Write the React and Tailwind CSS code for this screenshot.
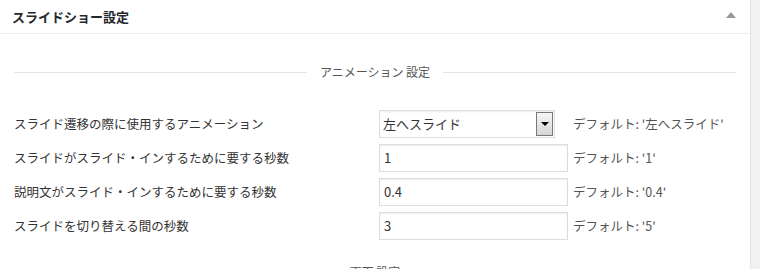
const rows = [
  { label: "スライド遷移の際に使用するアニメーション", type: "select", value: "左へスライド", def: "左へスライド" },
  { label: "スライドがスライド・インするために要する秒数", type: "text", value: "1", def: "1" },
  { label: "説明文がスライド・インするために要する秒数", type: "text", value: "0.4", def: "0.4" },
  { label: "スライドを切り替える間の秒数", type: "text", value: "3", def: "5" },
];

function Divider({ title, className }) {
  return (
    <div className={"flex items-center h-[18px] " + className}>
      <div className="flex-1 h-px bg-[#e5e5e5]" />
      <div className="px-[13px] text-[12px] text-[#555]">{title}</div>
      <div className="flex-1 h-px bg-[#e5e5e5]" />
    </div>
  );
}

function SelectBox({ value }) {
  return (
    <div className="w-[176px] h-[28px] border border-[#ddd] bg-white flex items-stretch shadow-[inset_0_1px_2px_rgba(0,0,0,0.07)]">
      <div className="flex-1 pl-[3px] flex items-center text-[13px] text-[#333]">{value}</div>
      <div className="w-[17px] my-px mr-px border border-[#777] bg-gradient-to-b from-[#f6f6f6] to-[#d6d6d6] flex items-center justify-center">
        <div className="w-0 h-0 border-l-[4px] border-r-[4px] border-t-[4px] border-l-transparent border-r-transparent border-t-black" />
      </div>
    </div>
  );
}

function TextBox({ value }) {
  return (
    <div className="w-[189px] h-[28px] border border-[#ddd] bg-white pl-[4px] flex items-center text-[13px] text-[#333] shadow-[inset_0_1px_2px_rgba(0,0,0,0.07)]">
      {value}
    </div>
  );
}

export default function App() {
  return (
    <div
      className="w-[760px] h-[269px] overflow-hidden bg-[#f1f1f1]"
      style={{ fontFamily: '"Noto Sans CJK JP", "Liberation Sans", sans-serif' }}
    >
      <div className="w-[751px] h-full bg-white border-r border-[#e5e5e5]">
        <div className="h-[34px] border-b border-[#eee] flex items-center justify-between pl-[12px] pr-[14px]">
          <div className="text-[13px] font-bold text-[#23282d]">スライドショー設定</div>
          <div className="w-0 h-0 border-l-[5px] border-r-[5px] border-b-[6px] border-l-transparent border-r-transparent border-b-[#999] mb-[4px]" />
        </div>
        <div className="px-[14px]">
          <Divider title="アニメーション 設定" className="mt-[29px]" />
          <div className="mt-[29px] flex flex-col gap-[6px]">
            {rows.map((row, i) => (
              <div key={i} className="flex items-center h-[28px]">
                <div className="w-[365px] text-[12.5px] text-[#333]">{row.label}</div>
                {row.type == "select" ? <SelectBox value={row.value} /> : <TextBox value={row.value} />}
                <div className={"text-[12.5px] text-[#555] " + (row.type == "select" ? "ml-[18px]" : "ml-[5px]")}>
                  デフォルト: '{row.def}'
                </div>
              </div>
            ))}
          </div>
          <Divider title="画面 設定" className="mt-[23px]" />
        </div>
      </div>
    </div>
  );
}
